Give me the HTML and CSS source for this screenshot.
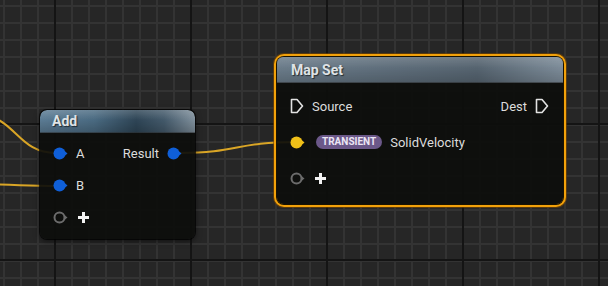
FILE: index.html
```html
<!DOCTYPE html>
<html lang="en">
<head>
    <meta charset="UTF-8">
    <title>Blueprint Graph</title>
    <link rel="stylesheet" href="styles.css">
</head>
<body>
    <div class="graph">
        <svg class="wires" width="608" height="286" viewBox="0 0 608 286">
            <path d="M-10 116 C 18 126, 22 153, 56 153" />
            <path d="M-5 184.5 C 20 185, 30 186, 56 186" />
            <path d="M180 153 C 238 153, 236 142, 296 142" />
        </svg>

        <div class="node node-add">
            <div class="node-head">Add</div>
            <div class="node-body">
                <div class="row">
                    <div class="pin-in">
                        <svg class="pin" width="15" height="13" viewBox="0 0 15 13"><circle cx="6.5" cy="6.5" r="6" fill="#0f5fd8"/><path d="M11 3.5 L14.5 6.5 L11 9.5 Z" fill="#0f5fd8"/></svg>
                        <span>A</span>
                    </div>
                    <div class="pin-out">
                        <span>Result</span>
                        <svg class="pin" width="15" height="13" viewBox="0 0 15 13"><circle cx="6.5" cy="6.5" r="6" fill="#0f5fd8"/><path d="M11 3.5 L14.5 6.5 L11 9.5 Z" fill="#0f5fd8"/></svg>
                    </div>
                </div>
                <div class="row">
                    <div class="pin-in">
                        <svg class="pin" width="15" height="13" viewBox="0 0 15 13"><circle cx="6.5" cy="6.5" r="6" fill="#0f5fd8"/><path d="M11 3.5 L14.5 6.5 L11 9.5 Z" fill="#0f5fd8"/></svg>
                        <span>B</span>
                    </div>
                </div>
                <div class="row">
                    <div class="pin-in">
                        <svg class="pin" width="15" height="13" viewBox="0 0 15 13"><circle cx="6.5" cy="6.5" r="5" fill="none" stroke="#6c6c6c" stroke-width="2"/><path d="M11.2 3.8 L14.5 6.5 L11.2 9.2 Z" fill="#6c6c6c"/></svg>
                        <svg class="plus" width="11" height="11" viewBox="0 0 11 11"><rect x="4" y="0" width="3" height="11" fill="#f2f2f2"/><rect x="0" y="4" width="11" height="3" fill="#f2f2f2"/></svg>
                    </div>
                </div>
            </div>
        </div>

        <div class="node node-map selected">
            <div class="node-head">Map Set</div>
            <div class="node-body">
                <div class="row">
                    <div class="pin-in">
                        <svg class="pin" width="14" height="16" viewBox="0 0 14 16"><path d="M1.5 1.5 H7 L12.5 8 L7 14.5 H1.5 Z" fill="none" stroke="#e2e2e2" stroke-width="1.6" stroke-linejoin="round"/></svg>
                        <span>Source</span>
                    </div>
                    <div class="pin-out">
                        <span>Dest</span>
                        <svg class="pin" width="14" height="16" viewBox="0 0 14 16"><path d="M1.5 1.5 H7 L12.5 8 L7 14.5 H1.5 Z" fill="none" stroke="#e2e2e2" stroke-width="1.6" stroke-linejoin="round"/></svg>
                    </div>
                </div>
                <div class="row">
                    <div class="pin-in">
                        <svg class="pin" width="15" height="13" viewBox="0 0 15 13"><circle cx="6.5" cy="6.5" r="6" fill="#f0c018"/><path d="M11 3.5 L14.5 6.5 L11 9.5 Z" fill="#f0c018"/></svg>
                        <span class="badge">TRANSIENT</span>
                        <span>SolidVelocity</span>
                    </div>
                </div>
                <div class="row">
                    <div class="pin-in">
                        <svg class="pin" width="15" height="13" viewBox="0 0 15 13"><circle cx="6.5" cy="6.5" r="5" fill="none" stroke="#6c6c6c" stroke-width="2"/><path d="M11.2 3.8 L14.5 6.5 L11.2 9.2 Z" fill="#6c6c6c"/></svg>
                        <svg class="plus" width="11" height="11" viewBox="0 0 11 11"><rect x="4" y="0" width="3" height="11" fill="#f2f2f2"/><rect x="0" y="4" width="11" height="3" fill="#f2f2f2"/></svg>
                    </div>
                </div>
            </div>
        </div>
    </div>
</body>
</html>
```

FILE: styles.css
```css
body {
    margin: 0;
    padding: 0;
    background-color: #262626;
    font-family: Roboto, "Liberation Sans", sans-serif;
}

.graph {
    position: relative;
    width: 608px;
    height: 286px;
    overflow: hidden;
    background-color: #262626;
    background-image:
        linear-gradient(90deg, #141414 2px, transparent 2px),
        linear-gradient(180deg, #141414 2px, transparent 2px),
        linear-gradient(90deg, #333333 2px, transparent 2px),
        linear-gradient(180deg, #333333 2px, transparent 2px);
    background-size: 136px 100%, 100% 136px, 17px 100%, 100% 17px;
    background-position: 54px 0, 0 123px, 3px 0, 0 5px;
}

.wires {
    position: absolute;
    left: 0;
    top: 0;
}

.wires path {
    fill: none;
    stroke: #d9a526;
    stroke-width: 2;
}

/* nodes sit on the free canvas */
.node {
    position: absolute;
    display: flex;
    flex-direction: column;
    border-radius: 7px;
    background-color: rgba(13, 14, 12, 0.93);
    box-shadow: 0 0 0 1px rgba(0, 0, 0, 0.7), 0 2px 6px rgba(0, 0, 0, 0.6);
    overflow: hidden;
    color: #dcdcdc;
    font-size: 13px;
}

.node-add {
    left: 40px;
    top: 110px;
    width: 155px;
    height: 129px;
}

.node-map {
    left: 277px;
    top: 57px;
    width: 286px;
    height: 147px;
}

.node.selected {
    overflow: visible;
    box-shadow: 0 0 0 1px #1a1300, 0 0 0 3px #f2a10a, 0 0 0 4px rgba(120, 70, 0, 0.6);
}

.node-head {
    padding-left: 12px;
    font-weight: bold;
    font-size: 14px;
    color: #dfe3e6;
    text-shadow: 1px 1px 1px rgba(0, 0, 0, 0.6);
    display: flex;
    align-items: center;
    border-bottom: 1px solid rgba(0, 0, 0, 0.5);
}

.node-add .node-head {
    height: 22px;
    border-radius: 7px 7px 0 0;
    background:
        linear-gradient(180deg, rgba(255, 255, 255, 0.18), rgba(255, 255, 255, 0) 45%, rgba(0, 0, 0, 0.18)),
        linear-gradient(90deg, #5b7b93 0%, #4a6a81 35%, #2e4556 62%, #43596a 80%, #7f8f9b 100%);
}

.node-map .node-head {
    height: 25px;
    padding-left: 14px;
    border-radius: 6px 6px 0 0;
    background:
        linear-gradient(180deg, rgba(255, 255, 255, 0.16), rgba(255, 255, 255, 0) 45%, rgba(0, 0, 0, 0.15)),
        linear-gradient(90deg, #6a7b89 0%, #5c6b78 45%, #55636f 70%, #7c8b98 100%);
}

.node-body {
    display: flex;
    flex-direction: column;
}

.node-add .node-body {
    padding: 4px 0 6px;
}

.node-map .node-body {
    padding: 5px 0 8px;
}

.row {
    display: flex;
    align-items: center;
    justify-content: space-between;
    padding: 0 13px 0 13px;
}

.node-add .row {
    height: 32px;
}

.node-map .row {
    height: 36px;
    padding-right: 14px;
}

.pin-in, .pin-out {
    display: flex;
    align-items: center;
    gap: 8px;
}

.pin {
    display: block;
    flex-shrink: 0;
}

.plus {
    display: block;
    margin-left: 2px;
}

.badge {
    background-color: #6b5889;
    color: #ece6f4;
    font-size: 10px;
    font-weight: bold;
    padding: 1px 6px;
    border-radius: 7px;
    line-height: 12px;
    margin-left: 3px;
}
```
